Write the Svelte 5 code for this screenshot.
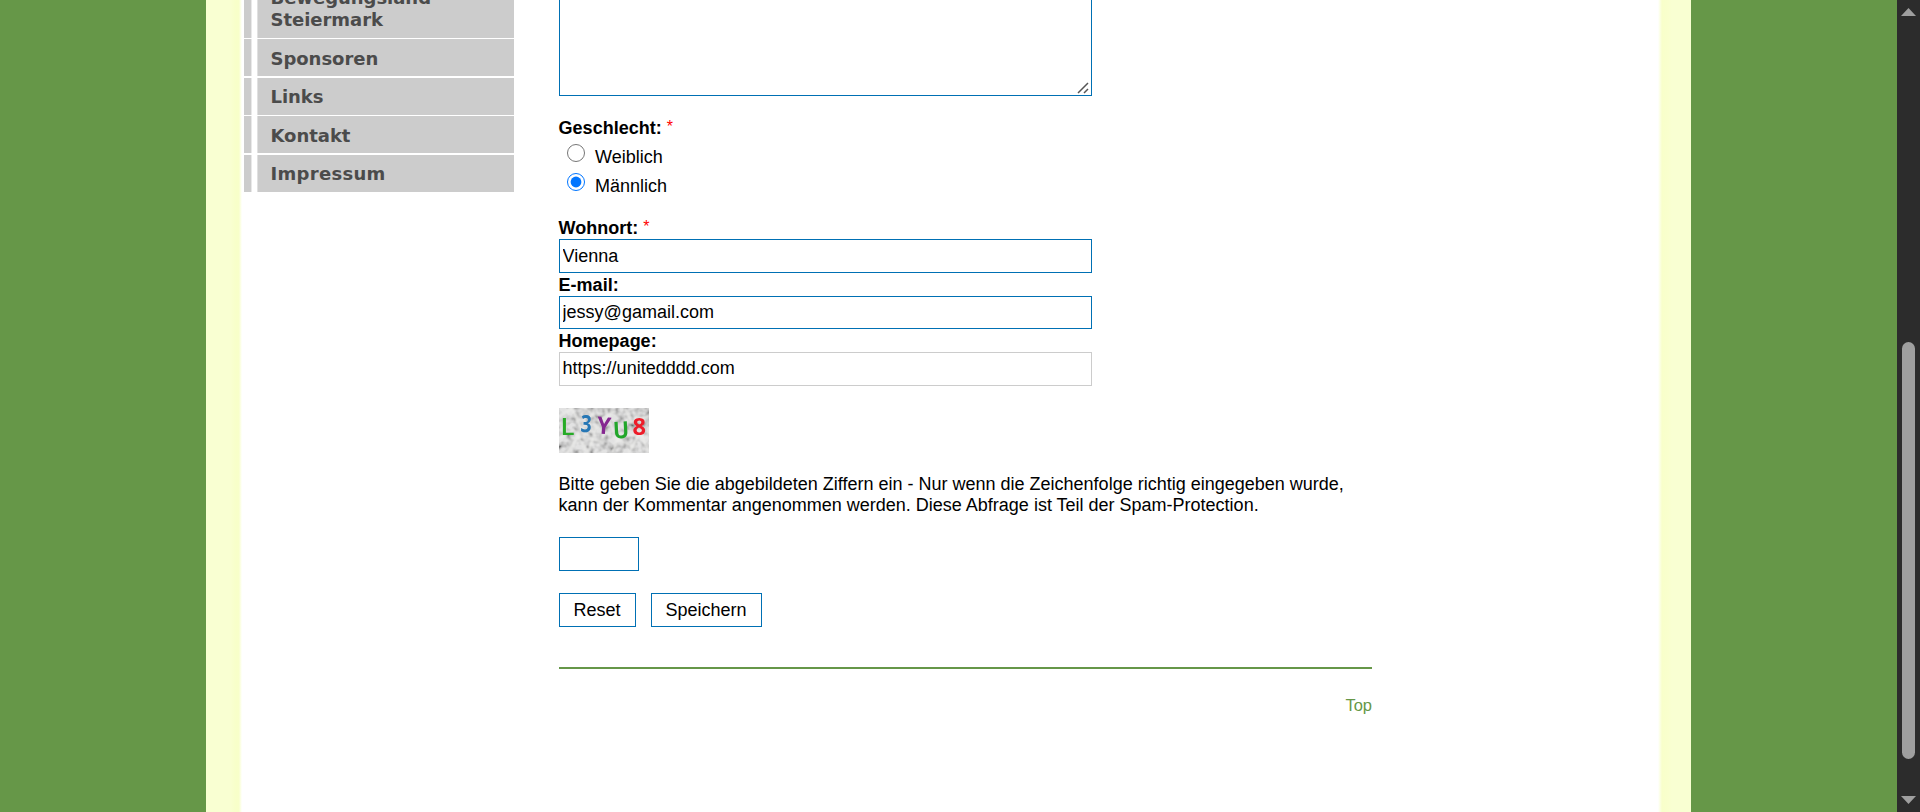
<script>
  const menu = ['Sponsoren', 'Links', 'Kontakt', 'Impressum'];
  const genders = ['Weiblich', 'Männlich'];
  let gender = $state('Männlich');
  let city = $state('Vienna');
  let email = $state('jessy@gamail.com');
  let homepage = $state('https://unitedddd.com');
</script>

<div class="page">
  <div class="paper">
    <nav>
      <a class="item first" href="#top"><span>Bewegungsland<br />Steiermark</span></a>
      {#each menu as entry}
        <a class="item" class:wide={entry === 'Impressum'} href="#top"><span>{entry}</span></a>
      {/each}
    </nav>

    <main>
      <div class="area">
        <svg width="12" height="12" viewBox="0 0 12 12"><path d="M1 11L11 1M7 11L11 7" stroke="#555" stroke-width="1.5" fill="none" /></svg>
      </div>

      <div class="label gender">Geschlecht: <i>*</i></div>
      {#each genders as g}
        <label class="radio">
          <input type="radio" name="gender" value={g} bind:group={gender} /><span>{g}</span>
        </label>
      {/each}

      <div class="label city">Wohnort: <i>*</i></div>
      <input class="field" bind:value={city} />
      <div class="label tall">E-mail:</div>
      <input class="field mail" bind:value={email} />
      <div class="label tall">Homepage:</div>
      <input class="field plain" bind:value={homepage} />

      <svg class="captcha" width="90" height="45" viewBox="0 0 90 45">
        <defs>
          <filter id="grain" x="0" y="0" width="100%" height="100%">
            <feTurbulence type="fractalNoise" baseFrequency="0.14" numOctaves="2" seed="8" />
            <feColorMatrix values="2.2 0 0 0 -0.4  2.2 0 0 0 -0.4  2.2 0 0 0 -0.4  0 0 0 0 1" />
          </filter>
          <filter id="soft" x="0" y="0" width="100%" height="100%"><feGaussianBlur stdDeviation="0.8" /></filter>
          <filter id="ink"><feGaussianBlur stdDeviation="0.5" /></filter>
        </defs>
        <rect width="90" height="45" fill="#cbcbcb" />
        <rect width="90" height="45" filter="url(#grain)" opacity="0.45" />
        <path filter="url(#soft)" d="M0 9L14 0M0 30L15 22L29 45M8 45L20 28L44 34M13 1L22 20L35 24M26 0L40 13L56 3M38 17L30 43M46 0L57 31L76 39M53 45L61 26L89 29M66 0L72 14L90 8M70 45L81 24L90 45M0 17L9 24" stroke="#ececea" stroke-width="2.2" fill="none" />
        <g class="glyphs" filter="url(#ink)">
          <text class="thin" x="1.500" y="26.500" fill="#27ab26" textLength="14" lengthAdjust="spacingAndGlyphs">L</text>
          <text x="21.500" y="24" fill="#2777b5" textLength="11" lengthAdjust="spacingAndGlyphs" transform="rotate(3 27 17)">3</text>
          <text x="38" y="26" fill="#852590" textLength="14" lengthAdjust="spacingAndGlyphs" transform="rotate(5 45 18)">Y</text>
          <text x="54" y="30.500" fill="#22a62c" textLength="16" lengthAdjust="spacingAndGlyphs" transform="rotate(-3 61 23)">U</text>
          <text x="73.500" y="27" fill="#ed1e29" textLength="13.500" lengthAdjust="spacingAndGlyphs">8</text>
        </g>
      </svg>

      <p>Bitte geben Sie die abgebildeten Ziffern ein - Nur wenn die Zeichenfolge richtig eingegeben wurde,<br />kann der Kommentar angenommen werden. Diese Abfrage ist Teil der Spam-Protection.</p>
      <input class="field code" aria-label="Code" />
      <div class="buttons">
        <button class="reset">Reset</button>
        <button class="save">Speichern</button>
      </div>
      <hr />
      <a class="top" href="#top">Top</a>
    </main>
  </div>

  <div class="scroll">
    <svg width="15" height="8" viewBox="0 0 15 8"><path d="M0 8L7.5 0L15 8Z" fill="#9f9f9f" /></svg>
    <div class="thumb"></div>
    <svg width="15" height="8" viewBox="0 0 15 8"><path d="M0 0L7.5 8L15 0Z" fill="#9f9f9f" /></svg>
  </div>
</div>

<style>
  :global(body) { margin: 0; overflow: hidden; }
  .page {
    box-sizing: border-box; display: flex; justify-content: space-between;
    width: 1920px; height: 812px; padding-left: 206px; overflow: hidden;
    background: #669748;
    font: 18px/21px "Liberation Sans", Arial, sans-serif; color: #000;
  }
  .paper {
    box-sizing: border-box; display: flex; align-items: flex-start;
    width: 1485px; height: 812px; padding-left: 38px;
    background: linear-gradient(90deg, #f9ffd2 0, #f9ffd2 24px, #f8ffc9 30px, #f8ffca 33px, #fff 36px, #fff 1452px, #f8ffca 1456px, #f9ffcd 1462px, #f9ffd2 1466px);
  }
  nav { width: 270px; margin-right: 45px; }
  .item {
    box-sizing: border-box; display: flex; align-items: center;
    height: 37px; margin-top: 2px; padding-left: 26.5px;
    background: linear-gradient(90deg, #ccc 7px, #e8e8e8 7px, #e8e8e8 8px, #fff 8px, #fff 13px, #e0e0e0 13px, #e0e0e0 14px, #ccc 14px);
    color: #4b4b4b; text-decoration: none; letter-spacing: -0.03px;
    font: bold 18px/22px "DejaVu Sans", Verdana, sans-serif;
  }
  .item.wide { letter-spacing: 0.3px; }
  .item.first { height: 38px; margin-top: 0; align-items: flex-end; padding-bottom: 7px; }
  .item:nth-child(2), .item:nth-child(4) { margin-top: 1px; padding-top: 2px; }
  main { display: flex; flex-direction: column; align-items: flex-start; width: 813px; }
  .area {
    box-sizing: border-box; display: flex; align-items: flex-end; justify-content: flex-end;
    width: 533px; height: 96px; padding: 0 2px 1px 0;
    border: 1px solid #0070b4; border-top: 0; background: #fff;
  }
  .label { height: 21px; font-weight: bold; white-space: pre; text-indent: -0.4px; }
  .label i { color: #f00; font: 16px/0 "Liberation Sans", Arial, sans-serif; vertical-align: 2px; }
  .gender { height: 20px; margin-top: 22px; }
  .city { margin-top: 22px; }
  .tall { height: 23px; line-height: 25px; }
  .radio { display: flex; height: 29px; padding-left: 8px; }
  .radio input { width: 18px; height: 18px; margin: 6px 10px 0 0; accent-color: #0075ff; }
  .radio span { padding-top: 9px; }
  .field {
    box-sizing: border-box; width: 533px; height: 34px; margin: 0; padding: 0 2.6px;
    border: 1px solid #0070b4; border-radius: 0; background: #fff;
    font: inherit; color: #000; outline: 0;
  }
  .mail { height: 33px; }
  .plain { border-color: #ccc; padding-bottom: 2px; }
  .captcha { display: block; margin-top: 22px; }
  .glyphs { font: bold 23.5px "Open Sans", sans-serif; }
  .thin { font-weight: 600; }
  p { margin: 21px 0 0 -0.4px; white-space: nowrap; }
  .code { width: 80px; margin-top: 21px; }
  .buttons { display: flex; gap: 15px; margin-top: 22px; }
  button {
    height: 34px; padding: 0 1px 0 0; border: 1px solid #0070b4; background: #fff;
    font: inherit; color: #000;
  }
  .reset { width: 77px; }
  .save { width: 111px; }
  hr { width: 813px; height: 2px; margin: 40px 0 0; border: 0; background: #669748; }
  .top { align-self: flex-end; margin-top: 26px; font-size: 16.5px; color: #669748; text-decoration: none; }
  .scroll {
    box-sizing: border-box; display: flex; flex-direction: column; align-items: center;
    width: 23px; height: 812px; padding: 8px 0; background: #2c2c2c;
  }
  .scroll svg { display: block; }
  .thumb { width: 13px; height: 417px; margin: 326px 0 37px; border-radius: 7px; background: #9f9f9f; }
</style>
